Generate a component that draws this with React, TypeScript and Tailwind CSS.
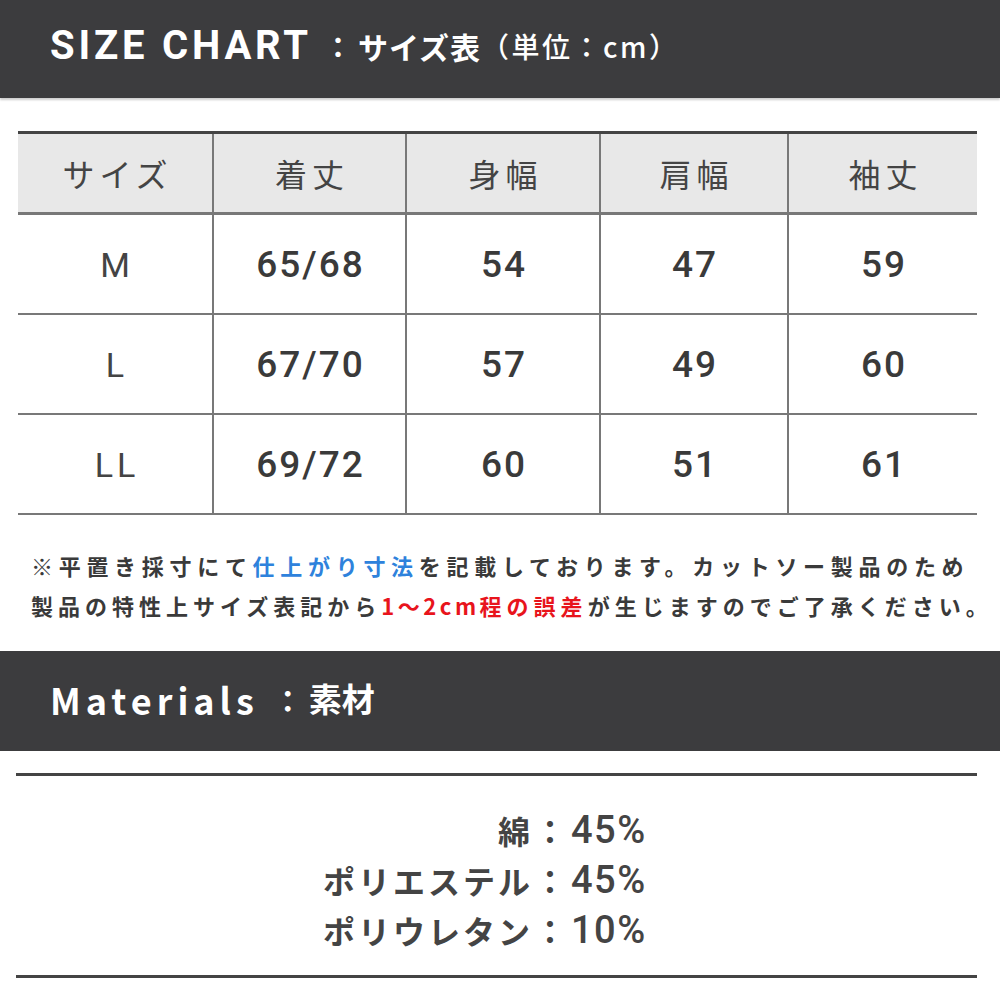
import React from 'react'

const jp = "font-['Noto_Sans_CJK_JP','Noto_Sans',sans-serif]"
const num = "font-['Roboto','Noto_Sans_CJK_JP',sans-serif]"

const headers = ['サイズ', '着丈', '身幅', '肩幅', '袖丈']
const rows = [
  ['M', '65/68', '54', '47', '59'],
  ['L', '67/70', '57', '49', '60'],
  ['LL', '69/72', '60', '51', '61'],
]
const cols = 'grid grid-cols-[194px_193px_194px_188px_190px]'

const materials = [
  ['綿', '45%'],
  ['ポリエステル', '45%'],
  ['ポリウレタン', '10%'],
]

export default function App() {
  return (
    <div className="w-[1000px] h-[1000px] bg-white flex flex-col overflow-hidden">
      {/* size chart header */}
      <div className="h-[98px] bg-[#3c3c3e] shadow-[0_2px_2px_rgba(0,0,0,0.2)] flex items-center pl-[50px] pb-[6px] text-white whitespace-nowrap">
        <span className={`${num} text-[40px] font-bold tracking-[3.8px]`}>SIZE CHART</span>
        <span className={`${jp} text-[28px] font-bold ml-[12px]`}>：</span>
        <span className={`${jp} text-[30px] font-bold ml-[6px] tracking-[1px]`}>サイズ表</span>
        <span className={`${jp} text-[28px] font-medium tracking-[2.5px]`}>（単位：cm）</span>
      </div>

      {/* table */}
      <div className="mx-[18px] mt-[33px] w-[959px] border-t-[3px] border-[#444]">
        <div className={`${cols} h-[81px] bg-[#e8e8e8] border-b-[3px] border-[#787878]`}>
          {headers.map((h, i) => (
            <div
              key={h}
              className={`${jp} flex items-center justify-center text-[32px] text-[#444] tracking-[5px] pl-[5px] ${i > 0 ? 'border-l-2 border-[#787878]' : ''}`}
            >
              {h}
            </div>
          ))}
        </div>
        {rows.map((r) => (
          <div key={r[0]} className={`${cols} h-[100px] border-b-2 border-[#787878]`}>
            {r.map((c, i) => (
              <div
                key={i}
                className={`${num} flex items-center justify-center pt-[2px] ${
                  i === 0
                    ? 'text-[34px] text-[#444] tracking-[4px] pl-[4px]'
                    : 'text-[37px] font-medium text-[#3a3a3a] tracking-[2px] pl-[2px] border-l-2 border-[#787878]'
                }`}
              >
                {c}
              </div>
            ))}
          </div>
        ))}
      </div>

      {/* note */}
      <div className={`${jp} mt-[30px] pl-[31px] text-[22px] font-bold text-[#3a3a3a] leading-[40px] whitespace-nowrap`}>
        <div className="tracking-[5.7px]">
          ※平置き採寸にて<span className="text-[#2e82dc]">仕上がり寸法</span>を記載しております。カットソー製品のため
        </div>
        <div className="tracking-[5px]">
          製品の特性上サイズ表記から
          <span className="text-[#e8141c]">
            <span className="tracking-[3.5px]">1〜2cm</span>程の誤差
          </span>
          が生じますのでご了承ください。
        </div>
      </div>

      {/* materials header */}
      <div className="mt-[26px] h-[100px] bg-[#3c3c3e] flex items-center pl-[50px] pb-[4px] text-white whitespace-nowrap">
        <span className={`${jp} text-[36px] font-bold tracking-[5px]`}>Materials</span>
        <span className={`${jp} text-[30px] font-bold ml-[14px]`}>：</span>
        <span className={`${jp} text-[33px] font-bold ml-[6px]`}>素材</span>
      </div>

      <div className="mx-[16px] mt-[22px] w-[961px] h-[3px] bg-[#444]" />

      <div className="mt-[29px] flex flex-col text-[#444]">
        {materials.map(([k, v]) => (
          <div key={k} className="h-[50px] flex items-center">
            <span className={`${jp} w-[533px] text-right text-[32px] font-bold tracking-[3px]`}>{k}</span>
            <span className={`${jp} w-[34px] text-center text-[32px] font-bold`}>：</span>
            <span className={`${num} ml-[4px] text-[38px] font-medium tracking-[1.5px]`}>{v}</span>
          </div>
        ))}
      </div>

      <div className="mx-[16px] mt-[20px] w-[961px] h-[3px] bg-[#444]" />
    </div>
  )
}
